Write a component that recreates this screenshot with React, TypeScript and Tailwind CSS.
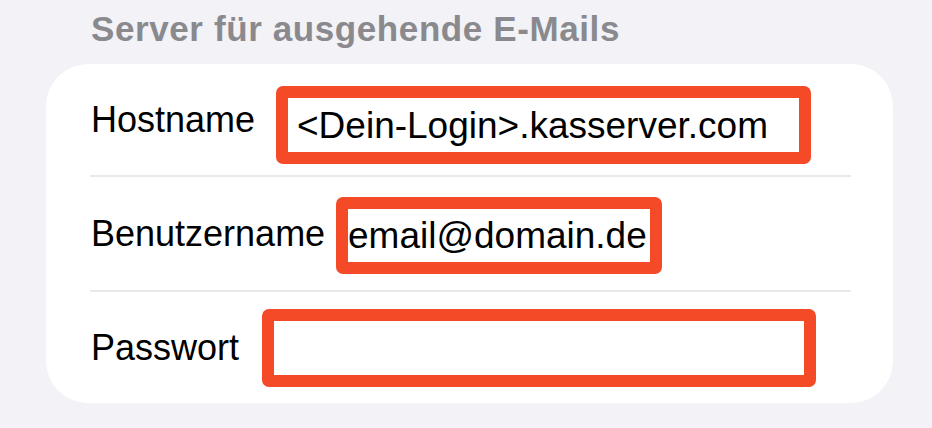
import React from "react";

const font = { fontFamily: '"Liberation Sans", Arial, sans-serif' };

export default function App() {
  return (
    <div className="w-[932px] h-[428px] bg-[#f2f2f7] overflow-hidden" style={font}>
      <div className="pt-[11px] pl-[91px] h-[45px] mb-[19px] text-[35px] leading-[35px] font-bold tracking-[0.6px] text-[#8a8a8e]">
        Server für ausgehende E-Mails
      </div>
      <div className="ml-[46px] w-[847px] h-[339px] rounded-[42px] bg-white flex flex-col">
        {/* Row 1 */}
        <div className="h-[111px] pl-[45px] flex items-center">
          <div className="w-[185px] shrink-0 text-[36px] leading-none text-black">Hostname</div>
          <div className="mt-[11px] w-[535px] h-[78px] border-[12px] border-[#f44a28] rounded-[7px] flex items-center pl-[9px] text-[37px] leading-none text-black whitespace-nowrap">
            &lt;Dein-Login&gt;.kasserver.com
          </div>
        </div>
        <div className="ml-[44px] w-[761px] h-[2px] bg-[#e8e8ed]" />
        {/* Row 2 */}
        <div className="h-[113px] pl-[45px] flex items-center">
          <div className="w-[245px] shrink-0 text-[36px] leading-none text-black">Benutzername</div>
          <div className="mt-[3px] w-[326px] h-[77px] border-[12px] border-[#f44a28] rounded-[7px] flex items-center text-[37px] leading-none text-black whitespace-nowrap">
            email@domain.de
          </div>
        </div>
        <div className="ml-[44px] w-[761px] h-[2px] bg-[#e8e8ed]" />
        {/* Row 3 */}
        <div className="h-[111px] pl-[45px] flex items-center">
          <div className="w-[171px] shrink-0 text-[36px] leading-none text-black">Passwort</div>
          <div className="w-[554px] h-[78px] border-[12px] border-[#f44a28] rounded-[7px]" />
        </div>
      </div>
    </div>
  );
}
